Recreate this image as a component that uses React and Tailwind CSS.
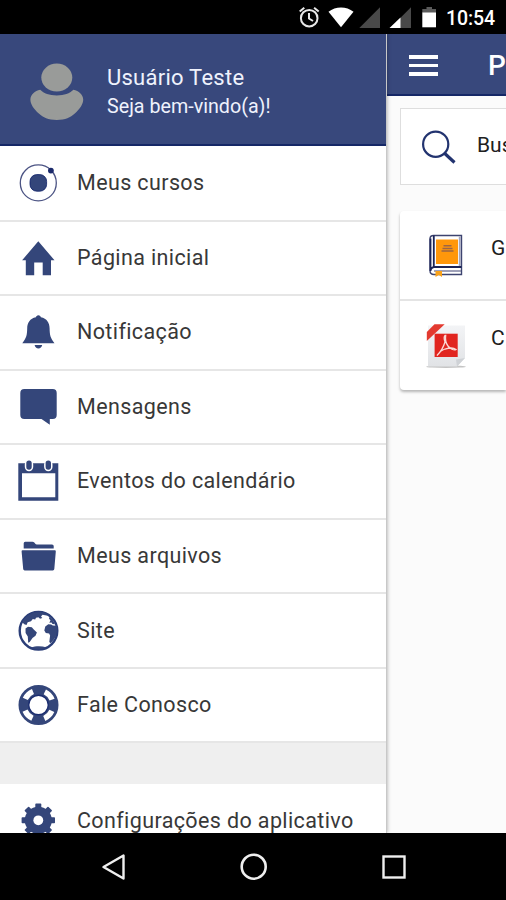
const MeusCursosIcon = () => (
  <>
    <circle cx="22.3" cy="21.9" r="18" fill="none" stroke="#4c5484" strokeWidth="1.3" />
    <rect x="14" y="13.6" width="16.6" height="16.6" rx="6.8" stroke="#0e2068" strokeWidth="0.8" />
    <circle cx="34.9" cy="9.6" r="2.9" fill="#1b2a6b" />
  </>
);

const HomeIcon = () => (
  <path d="M22.3 5.2 38.5 24.3H35V39.2H26.7V26.6H18.2V39.2H9.8V24.3H6.1Z" />
);

const BellIcon = () => (
  <>
    <path d="M22.4 5.2c1.500 0 2.200 1 2.500 2.100 6 1.200 8.600 5.700 8.700 10.900.1 6.600.6 9.500 4.900 15H6.300c4.300-5.500 4.800-8.400 4.900-15 .1-5.200 2.700-9.700 8.700-10.900.3-1.100 1-2.100 2.500-2.100z" />
    <path d="M18.6 35h7.6c-.5 2.3-1.9 3.5-3.8 3.5s-3.3-1.2-3.8-3.5z" />
  </>
);

const MessageIcon = () => (
  <path d="M8.3 3.9H36.7q4 0 4 4V30q0 4-4 4H33.8V39.8L25.5 34H8.3q-4 0-4-4V7.9q0-4 4-4z" />
);

const CalendarIcon = () => (
  <>
    <path fillRule="evenodd" d="M2.3 4.2H42.3V41.7H2.3ZM6 14.2V38.2H39.3V14.2Z" />
    <rect x="8.8" y="1.2" width="8.4" height="11" rx="4.2" fill="#fff" />
    <rect x="28.1" y="1.2" width="8.4" height="11" rx="4.2" fill="#fff" />
    <rect x="10.3" y="1.4" width="5.4" height="9.4" rx="2.7" />
    <rect x="29.6" y="1.4" width="5.4" height="9.4" rx="2.7" />
  </>
);

const FolderIcon = () => (
  <>
    <path d="M7.7 14.6V9.2q0-1.5 1.5-1.5H16.5q1 0 1.8.9l1 1.2q.5.6 1.5.6H36q1.7 0 1.7 1.6V14.6Z" />
    <path d="M6.6 16.3H38.8q1.1 0 1 1.1L38.3 35q-.1 1.4-1.5 1.4H8.7q-1.4 0-1.5-1.4L5.6 17.4q-.1-1.1 1-1.1z" />
  </>
);

const GlobeIcon = () => (
  <>
    <circle cx="22.5" cy="21.8" r="18.8" fill="#fff" stroke="#2b3e78" strokeWidth="2.4" />
    <path d="M6.500 13.500C9.500 7 15 3.200 22.500 3c3.500 0 6.500.8 9.500 2.200l-1.500 1.300-4-.7-1.500 1.700 1.300 1.500-2.300.8-1.500-1.600-2.500.5-.8 1.800-2.400-.6-1.800 2.300-3.300 1-1.200 2.800-2.200-.8z" />
    <path d="M9.500 19.500l2.500-1.800 3.800.6 2.200 2.400 2.900 2.800-1.400 3.200-3 2.400-2.800 4-1.500.6-.4-6.200-2.200-3.500z" />
    <path d="M29.300 17.500l3-2.200 2.900.3 1.600 1 4 .2c1.300 7-1.300 13.200-6.300 17.500l-1.200-1.300.8-6.500-1-2-3.300-.5-1.500-2.500z" />
    <path d="M33.300 13.800l1.200-2.500-1.500-1.500.5-2c2.400 2 4.300 4.500 5.600 7.400l-2.600-.3-1-1.300z" />
    <path d="M15 38.500c4.500-1.500 10.500-1.500 15-.3-4.500 2.800-10.500 2.800-15 .3z" />
  </>
);

const LifebuoyIcon = () => (
  <>
    <circle cx="22.5" cy="22" r="14.5" fill="none" stroke="#34467a" strokeWidth="11" />
    <circle
      cx="22.5"
      cy="22"
      r="14.6"
      fill="none"
      stroke="#fff"
      strokeWidth="5.4"
      strokeDasharray="10.8 12.134"
      strokeDashoffset="-6.067"
    />
    <circle cx="22.5" cy="22" r="9.8" fill="#fff" stroke="#1b2d70" strokeWidth="1.4" />
  </>
);

const GearIcon = () => (
  <>
    {[0, 45, 90, 135].map((angle) => (
      <rect
        key={angle}
        x="19.3"
        y="4.6"
        width="6"
        height="33.4"
        rx="0.8"
        transform={`rotate(${angle} 22.3 21.3)`}
      />
    ))}
    <circle cx="22.3" cy="21.3" r="13.6" />
    <circle cx="22.3" cy="21.3" r="4.9" fill="#fff" />
  </>
);

const menuItems = [
  { label: "Meus cursos", icon: MeusCursosIcon },
  { label: "Página inicial", icon: HomeIcon },
  { label: "Notificação", icon: BellIcon },
  { label: "Mensagens", icon: MessageIcon },
  { label: "Eventos do calendário", icon: CalendarIcon },
  { label: "Meus arquivos", icon: FolderIcon },
  { label: "Site", icon: GlobeIcon },
  { label: "Fale Conosco", icon: LifebuoyIcon },
];

const MenuItem = ({ label, icon: Icon }) => (
  <div className="flex h-[74.55px] shrink-0 items-center border-b-2 border-[#e6e6e6] bg-white pl-4">
    <svg viewBox="0 0 44 44" className="h-11 w-11 shrink-0 fill-[#34467a]">
      <Icon />
    </svg>
    <span className="ml-[17px] whitespace-nowrap text-[21.5px] leading-6 tracking-[0.38px] text-[#383838]">
      {label}
    </span>
  </div>
);

const StatusBar = () => (
  <div className="flex h-[34px] shrink-0 items-center justify-end bg-black pr-[11px] text-white">
    <svg viewBox="296 0 144 34" className="h-[34px] w-36 shrink-0">
      {/* Alarm */}
      <g fill="none" stroke="#e8e8e8" strokeWidth="2">
        <circle cx="309.2" cy="18.2" r="8.3" />
        <path d="M309 13v5.5l4 2.5M299.7 11.5l4.600-3.800M318.700 11.500l-4.600-3.800" />
      </g>
      {/* Wifi */}
      <path d="M328.5 11.8C335.5 6 346.5 6 353.5 11.8L341 27.2Z" fill="#fff" />
      {/* Signal */}
      <path d="M380 7.3V28H359.3Z" fill="#494949" />
      <path d="M411 7.3V28H390.3Z" fill="#494949" />
      <path d="M400.5 17.5V28H389.5Z" fill="#fff" />
      {/* Battery */}
      <path d="M426.5 7h5.5v2h4v4H422.300V9h4.200z" fill="#5a5a5a" />
      <path d="M422.3 12.5H436V27.3H422.3Z" fill="#fff" />
    </svg>
    <span className="ml-[6px] mt-[3px] text-[19.5px] font-medium leading-6 tracking-[-0.1px]">10:54</span>
  </div>
);

const Drawer = () => (
  <aside className="z-10 flex w-[387px] shrink-0 flex-col overflow-hidden border-r border-[#c8c8c8] bg-white shadow-[0_0_4px_rgba(0,0,0,0.35)]">
    <div className="-mr-px mb-px flex h-28 shrink-0 items-center border-b-2 border-r border-b-[#152766] border-r-[#2b3a6c] bg-[#38487c] pl-[29px]">
      <svg viewBox="29 62 56 60" className="mt-[6px] h-[60px] w-14 fill-[#999b99]">
        <ellipse cx="56.8" cy="77.6" rx="15.5" ry="14" />
        <path d="M40.2 89.8c3.8 3.600 9 5.700 16.600 5.700s12.800-2.100 16.600-5.700c5.500 1.200 9.500 4.800 9.800 9.500.2 4.500-3.200 9.700-8.700 14.500-4 3.700-9 6.200-17.700 6.200s-13.700-2.500-17.700-6.200c-5.500-4.800-8.900-10-8.700-14.500.3-4.700 4.300-8.300 9.800-9.500z" />
      </svg>
      <div className="ml-[22px] mt-[5px] text-[#eff2fc]">
        <div className="whitespace-nowrap text-[22px] leading-[29px] tracking-[0.25px]">Usuário Teste</div>
        <div className="whitespace-nowrap text-[19.7px] leading-[29px]">Seja bem-vindo(a)!</div>
      </div>
    </div>
    {menuItems.map((item) => (
      <MenuItem key={item.label} {...item} />
    ))}
    <div className="h-[41px] shrink-0 bg-[#efefef]" />
    <MenuItem label="Configurações do aplicativo" icon={GearIcon} />
  </aside>
);

const BookIcon = () => (
  <svg viewBox="424 230 44 50" className="h-[50px] w-11 shrink-0">
    <path d="M433.5 235.5H461.5V274.5H434Q430 274.5 430 270.5V239Q430 235.5 433.5 235.5Z" fill="#fff" stroke="#3d4470" strokeWidth="1.4" />
    <path d="M433.8 235.5V266.5M461.5 267H434.5Q430.5 267.5 430.5 271V238.5" fill="none" stroke="#1c2457" strokeWidth="1.8" />
    <path d="M434 271H461" stroke="#74779a" strokeWidth="1.4" />
    <path d="M459.8 236.5V266" stroke="#a5a7be" strokeWidth="2" />
    <path d="M436 239.500H458V264H436Z" fill="#ff970b" />
    <path d="M443.5 245.8H451.5M442.500 248.400H452.500M441.500 251H453.500" stroke="#9b6547" strokeWidth="1.5" />
    <path d="M435.5 271H442V277L438.8 275 435.5 277Z" fill="#f8a21b" />
  </svg>
);

const PdfIcon = () => (
  <svg viewBox="424 322 44 50" className="h-[50px] w-11 shrink-0">
    <defs>
      <linearGradient id="paper" x1="0" y1="0" x2="0" y2="1">
        <stop offset="0" stopColor="#f3f4f6" />
        <stop offset="1" stopColor="#e1e3e6" />
      </linearGradient>
    </defs>
    <ellipse cx="446" cy="366.7" rx="20" ry="1.2" fill="#c4c4c4" />
    <path d="M428 325.5H465V358L457 366.5H428Z" fill="url(#paper)" />
    <path d="M465 358L457 366.5 456 359.5Z" fill="#cfd2d6" />
    <path d="M434.5 324.2H444.7L426.8 341V332Z" fill="#e33a30" />
    <path d="M434.6 333.7H457.7V357H434.6Z" fill="#e1251f" />
    <path
      d="M445 335.5c-1.500 1.500-.7 4.500 0 6.500-1.500 5-4 9.500-8 13.500 2-3 5-5.500 8-6.500 3.500-1 8.500-1.500 11 .5-2 1.500-6-1-8-3.500-2-2.500-3-6-2.300-10.500z"
      fill="none"
      stroke="#fbd9d5"
      strokeWidth="1.3"
    />
  </svg>
);

const MainPage = () => (
  <main className="flex min-w-0 flex-1 flex-col overflow-hidden bg-[#fbfbfb]">
    <header className="flex h-[62px] shrink-0 items-center border-b-2 border-[#152766] bg-[#38487c] pl-[22px] pt-[3px]">
      <div className="flex w-[29px] shrink-0 flex-col gap-[5px]">
        <span className="h-[3.5px] bg-white" />
        <span className="h-[3.5px] bg-white" />
        <span className="h-[3.5px] bg-white" />
      </div>
      <span className="ml-[50px] text-[28px] font-medium leading-8 text-white">P</span>
    </header>
    <div className="ml-[13px] mt-3 flex h-[77px] shrink-0 items-center border border-r-0 border-[#dedede] bg-white">
      <svg viewBox="418 126 42 40" className="ml-[17px] h-10 w-[42px] shrink-0">
        <g fill="none" stroke="#22336f">
          <circle cx="435.7" cy="143.2" r="12.6" strokeWidth="2.2" />
          <path d="M444.5 152.3L454.5 161.5" strokeWidth="3.2" />
        </g>
      </svg>
      <span className="-mt-1 ml-[17px] text-[21px] leading-6 text-[#202020]">Bus</span>
    </div>
    <div className="ml-[13px] mt-[26px] flex h-[179px] shrink-0 flex-col rounded-l-sm bg-white shadow-[0_2px_3px_rgba(0,0,0,0.28)]">
      <div className="flex h-[90px] items-start border-b-2 border-[#e4e4e4] pl-6 pt-[19px]">
        <BookIcon />
        <span className="ml-[23px] mt-[6px] text-[21px] leading-6 text-[#202020]">G</span>
      </div>
      <div className="flex h-[89px] items-start pl-6 pt-[21px]">
        <PdfIcon />
        <span className="ml-[23px] mt-[4px] text-[21px] leading-6 text-[#202020]">C</span>
      </div>
    </div>
  </main>
);

const NavigationBar = () => (
  <div className="flex h-[67px] shrink-0 items-center justify-between bg-black pl-[101px] pr-[98px]">
    <svg viewBox="0 0 26 30" className="h-[30px] w-[26px] fill-none stroke-[#efefef]">
      <path d="M22.5 3.5V26.5L2.5 15Z" strokeWidth="2.4" strokeLinejoin="round" />
    </svg>
    <svg viewBox="0 0 30 30" className="h-[30px] w-[30px] fill-none stroke-[#efefef]">
      <circle cx="14.7" cy="14.7" r="12" strokeWidth="2.6" />
    </svg>
    <svg viewBox="0 0 28 28" className="h-7 w-7 fill-none stroke-[#efefef]">
      <rect x="3.5" y="3.5" width="21" height="21" strokeWidth="2.4" />
    </svg>
  </div>
);

const App = () => {
  return (
    <div className="flex h-[900px] w-[506px] flex-col overflow-hidden bg-black font-[Roboto,sans-serif]">
      <StatusBar />
      <div className="flex min-h-0 flex-1 overflow-hidden">
        <Drawer />
        <MainPage />
      </div>
      <NavigationBar />
    </div>
  );
};

export default App;
